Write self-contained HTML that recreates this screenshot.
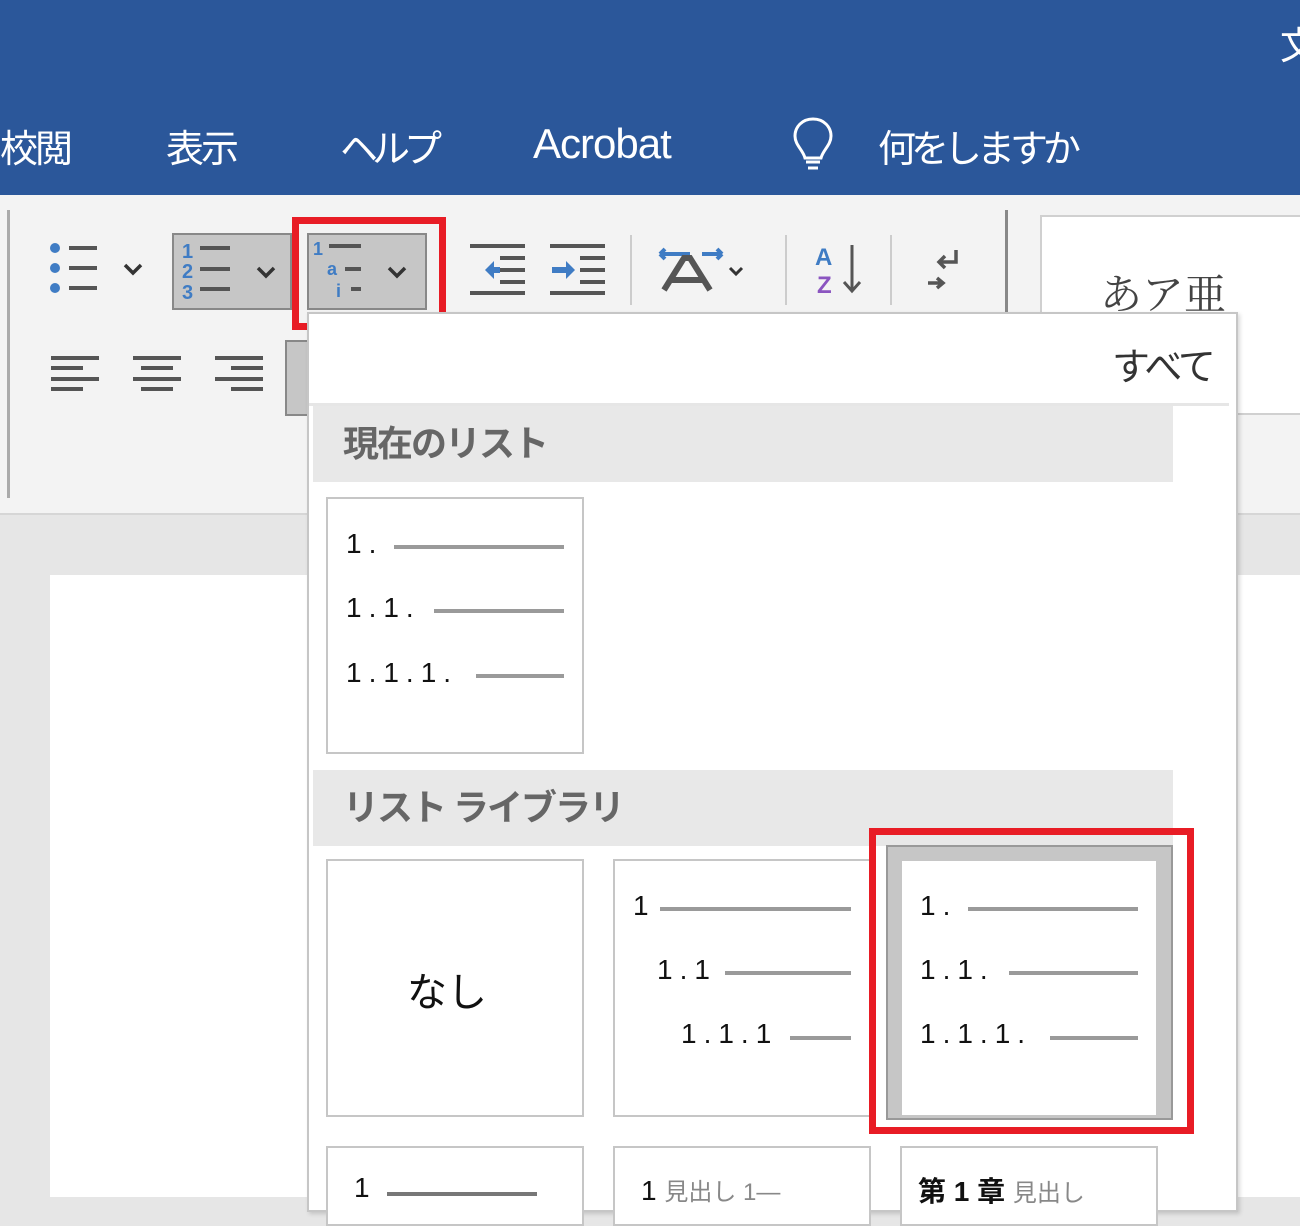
<!DOCTYPE html>
<html><head><meta charset="utf-8"><style>
*{margin:0;padding:0;box-sizing:border-box}
body{width:1300px;height:1197px;overflow:hidden;position:relative;background:#e6e6e6;font-family:"Liberation Sans","Noto Sans CJK JP",sans-serif}
.a{position:absolute}
.tab{position:absolute;top:118px;color:#fff;font-size:38px;white-space:nowrap;letter-spacing:-3px}
.box{position:absolute;background:#fff;border:2px solid #c6c6c6}
.t{position:absolute;font-size:28px;color:#111;white-space:nowrap;letter-spacing:7px;font-family:"Liberation Sans","Noto Sans CJK JP",sans-serif}
.ln{position:absolute;height:4px;background:#9a9a9a}
.hd{position:absolute;left:313px;width:860px;background:#e8e8e8;color:#666;font-size:36px;font-weight:bold;padding-left:30px;line-height:76px;letter-spacing:-2px}
.bar{position:absolute;height:4px;background:#777}
</style></head><body>
<div class="a" style="left:0;top:0;width:1300px;height:195px;background:#2b579a"></div>
<div class="tab" style="left:0">校閲</div>
<div class="tab" style="left:166px">表示</div>
<div class="tab" style="left:340px;letter-spacing:-6px">ヘルプ</div>
<div class="tab" style="left:533px;font-size:42px;top:120px;letter-spacing:-1px">Acrobat</div>
<svg class="a" style="left:790px;top:116px" width="46" height="58" viewBox="0 0 46 58"><path d="M23 3C12 3 5 11 5 20c0 9 8 14 10 22h16c2-8 10-13 10-22C41 11 34 3 23 3z" fill="none" stroke="#fff" stroke-width="3"/><path d="M16 46h14M18 52h10" stroke="#fff" stroke-width="3"/></svg>
<div class="tab" style="left:878px;letter-spacing:-5px">何をしますか</div>
<div class="tab" style="left:1280px;top:15px">文</div>

<div class="a" style="left:0;top:195px;width:1300px;height:320px;background:#f3f3f3;border-bottom:2px solid #d6d6d6"></div>
<div class="a" style="left:7px;top:210px;width:3px;height:288px;background:#aaa"></div>
<div class="a" style="left:1005px;top:210px;width:3px;height:110px;background:#888"></div>
<div class="a" style="left:1040px;top:215px;width:270px;height:200px;background:#fff;border:2px solid #d0d0d0"></div>
<div class="a" style="left:1100px;top:262px;font-size:42px;color:#444;font-family:'Noto Serif CJK SC',serif">あア亜</div>
<div class="a" style="left:50px;top:575px;width:1250px;height:622px;background:#fff"></div>

<!-- bullets -->
<svg class="a" style="left:45px;top:235px" width="110" height="65"><g fill="#3f7cc4"><circle cx="10" cy="13" r="5"/><circle cx="10" cy="33" r="5"/><circle cx="10" cy="53" r="5"/></g><g stroke="#555" stroke-width="4"><path d="M24 13h28M24 33h28M24 53h28"/></g><path d="M80 30l8 8 8-8" fill="none" stroke="#333" stroke-width="3.5"/></svg>
<div class="a" style="left:172px;top:233px;width:120px;height:77px;background:#c6c6c6;border:2px solid #888"></div>
<svg class="a" style="left:172px;top:233px" width="120" height="77"><g fill="#3f7cc4" font-size="20" font-weight="bold" font-family="Liberation Sans"><text x="10" y="25">1</text><text x="10" y="45">2</text><text x="10" y="66">3</text></g><g stroke="#555" stroke-width="4"><path d="M28 15h30M28 36h30M28 56h30"/></g><path d="M86 35l8 8 8-8" fill="none" stroke="#333" stroke-width="3.5"/></svg>
<div class="a" style="left:307px;top:233px;width:120px;height:77px;background:#c6c6c6;border:2px solid #888"></div>
<svg class="a" style="left:307px;top:233px" width="120" height="77"><g fill="#3f7cc4" font-size="18" font-weight="bold" font-family="Liberation Sans"><text x="6" y="22">1</text><text x="20" y="42">a</text><text x="29" y="64">i</text></g><g stroke="#555" stroke-width="4"><path d="M22 13h32M38 36h16M44 56h10"/></g><path d="M82 35l8 8 8-8" fill="none" stroke="#333" stroke-width="3.5"/></svg>
<div class="a" style="left:292px;top:217px;width:154px;height:113px;border:7px solid #e81c25"></div>
<!-- indents -->
<svg class="a" style="left:465px;top:240px" width="145" height="55"><g stroke="#555" stroke-width="4"><path d="M5 6h55M35 18h25M35 30h25M35 42h25M5 53h55M85 6h55M115 18h25M115 30h25M115 42h25M85 53h55"/></g><path d="M20 30l9-9v6h6v6h-6v6z" fill="#3f7cc4"/><path d="M110 30l-9-9v6h-14v6h14v6z" fill="#3f7cc4"/></svg>
<div class="a" style="left:630px;top:235px;width:2px;height:70px;background:#ccc"></div>
<div class="a" style="left:785px;top:235px;width:2px;height:70px;background:#ccc"></div>
<div class="a" style="left:890px;top:235px;width:2px;height:70px;background:#ccc"></div>
<svg class="a" style="left:650px;top:240px" width="110" height="55"><path d="M10 14h30M10 14l5-5M10 14l5 5M52 14h20M72 14l-5-5M72 14l-5 5" stroke="#3f7cc4" stroke-width="4" fill="none"/><path d="M14 50l20-32h6l20 32M22 40h30" stroke="#555" stroke-width="6" fill="none"/><path d="M80 28l6 6 6-6" fill="none" stroke="#333" stroke-width="3"/></svg>
<svg class="a" style="left:812px;top:240px" width="60" height="60"><text x="3" y="25" fill="#3f7cc4" font-size="24" font-weight="bold" font-family="Liberation Sans">A</text><text x="5" y="53" fill="#8b55c0" font-size="24" font-weight="bold" font-family="Liberation Sans">Z</text><path d="M40 5v45M32 42l8 9 8-9" stroke="#555" stroke-width="3" fill="none"/></svg>
<svg class="a" style="left:920px;top:245px" width="50" height="50"><path d="M36 5v12H20M25 11l-6 6 6 6M8 38h14M17 33l6 5-6 5" stroke="#555" stroke-width="3.5" fill="none"/></svg>
<svg class="a" style="left:45px;top:355px" width="240" height="40"><g stroke="#555" stroke-width="4"><path d="M6 3h48M6 13h32M6 24h48M6 34h32M88 3h48M96 13h32M88 24h48M96 34h32M170 3h48M186 13h32M170 24h48M186 34h32"/></g></svg>
<div class="a" style="left:285px;top:340px;width:25px;height:76px;background:#c6c6c6;border:2px solid #888"></div>

<!-- dropdown -->
<div class="a" style="left:307px;top:312px;width:931px;height:900px;background:#fff;border:2px solid #c6c6c6;box-shadow:2px 2px 4px rgba(0,0,0,.15)"></div>
<div class="a" style="left:1112px;top:336px;font-size:38px;color:#333;letter-spacing:-3px">すべて</div>
<div class="a" style="left:309px;top:403px;width:920px;height:3px;background:#e6e6e6"></div>
<div class="hd" style="top:406px">現在のリスト</div>
<div class="box" style="left:326px;top:497px;width:258px;height:257px"></div>
<div class="t" style="left:346px;top:528px">1.</div><div class="ln" style="left:394px;top:545px;width:170px"></div>
<div class="t" style="left:346px;top:592px">1.1.</div><div class="ln" style="left:434px;top:609px;width:130px"></div>
<div class="t" style="left:346px;top:657px">1.1.1.</div><div class="ln" style="left:476px;top:674px;width:88px"></div>

<div class="hd" style="top:770px">リスト ライブラリ</div>
<div class="box" style="left:326px;top:859px;width:258px;height:258px"></div>
<div class="t" style="left:407px;top:960px;font-size:40px;letter-spacing:0">なし</div>
<div class="box" style="left:613px;top:859px;width:258px;height:258px"></div>
<div class="t" style="left:633px;top:890px">1</div><div class="ln" style="left:660px;top:907px;width:191px"></div>
<div class="t" style="left:657px;top:954px">1.1</div><div class="ln" style="left:725px;top:971px;width:126px"></div>
<div class="t" style="left:681px;top:1018px">1.1.1</div><div class="ln" style="left:790px;top:1036px;width:61px"></div>
<div class="a" style="left:886px;top:845px;width:287px;height:275px;background:#c6c6c6;border:2px solid #999"></div>
<div class="box" style="left:900px;top:859px;width:258px;height:258px"></div>
<div class="t" style="left:920px;top:890px">1.</div><div class="ln" style="left:968px;top:907px;width:170px"></div>
<div class="t" style="left:920px;top:954px">1.1.</div><div class="ln" style="left:1009px;top:971px;width:129px"></div>
<div class="t" style="left:920px;top:1018px">1.1.1.</div><div class="ln" style="left:1050px;top:1036px;width:88px"></div>
<div class="a" style="left:869px;top:828px;width:325px;height:306px;border:7px solid #e81c25"></div>

<div class="box" style="left:326px;top:1146px;width:258px;height:80px"></div>
<div class="t" style="left:354px;top:1172px">1</div><div class="bar" style="left:387px;top:1192px;width:150px"></div>
<div class="box" style="left:613px;top:1146px;width:258px;height:80px"></div>
<div class="t" style="left:641px;top:1172px;letter-spacing:0">1 <span style="color:#888;font-size:24px">見出し 1—</span></div>
<div class="box" style="left:900px;top:1146px;width:258px;height:80px"></div>
<div class="t" style="left:918px;top:1170px;font-weight:bold;letter-spacing:0">第 1 章 <span style="color:#888;font-size:24px;font-weight:normal">見出し</span></div>
</body></html>
